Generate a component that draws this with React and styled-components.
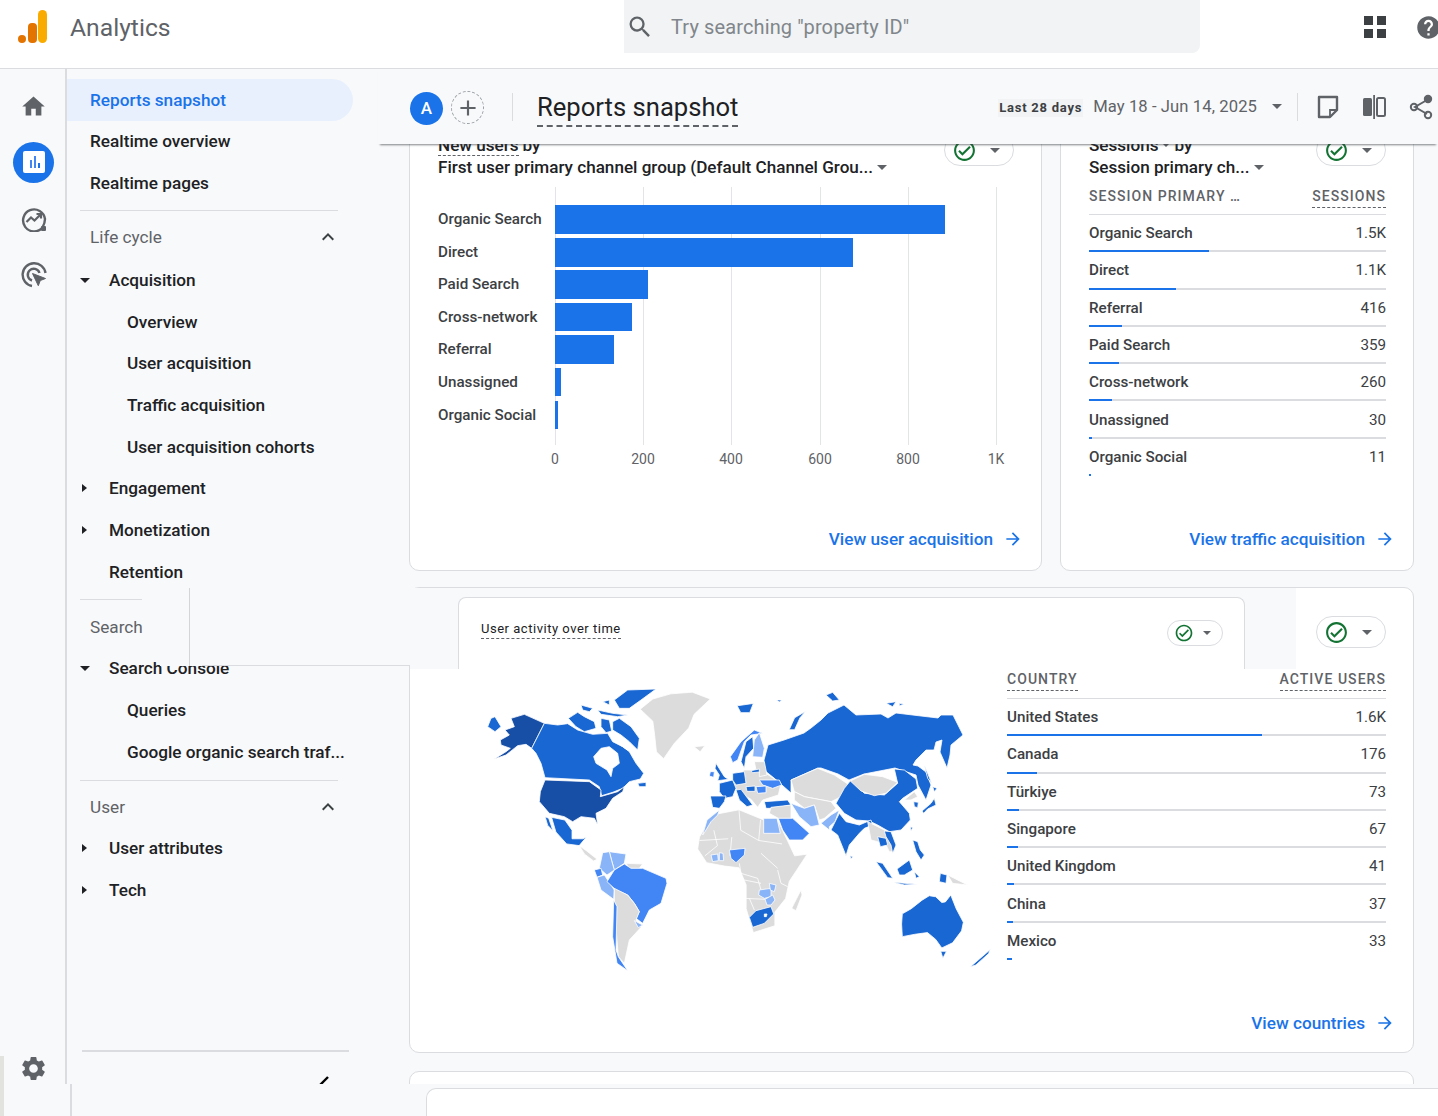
import React from 'react';
import styled, { createGlobalStyle } from 'styled-components';
import { MdHome, MdSettings, MdSearch, MdHelp, MdExpandLess, MdAdd, MdOutlineCheckCircle, MdArrowForward } from 'react-icons/md';

const Global = createGlobalStyle`
  html, body { margin: 0; padding: 0; background: #f8f9fa; }
  * { box-sizing: border-box; }
`;

const Page = styled.div`
  position: relative;
  width: 1438px;
  height: 1116px;
  overflow: hidden;
  background: #f8f9fa;
  font-family: Roboto, "Liberation Sans", sans-serif;
  color: #202124;
  display: flex;
  flex-direction: column;
`;

/* top bar */
const TopBar = styled.header`
  height: 69px;
  flex: none;
  background: #fff;
  border-bottom: 1px solid #dadce0;
  display: flex;
  align-items: flex-start;
`;

const Brand = styled.div`
  width: 624px;
  flex: none;
  height: 54px;
  padding-left: 17px;
  display: flex;
  align-items: center;
  gap: 23px;
  font-size: 24.7px;
  color: #5f6368;
`;

const SearchBox = styled.div`
  width: 576px;
  flex: none;
  height: 53px;
  background: #f1f3f4;
  border-bottom-right-radius: 8px;
  padding-left: 2px;
  display: flex;
  align-items: center;
  gap: 17px;
  font-size: 20px;
  color: #80868b;
  letter-spacing: 0.12px;

  & > svg {
    color: #5f6368;
  }
`;

const TopIcons = styled.div`
  height: 54px;
  flex: none;
  margin-left: 164px;
  display: flex;
  align-items: center;
  gap: 29px;
  color: #5f6368;
`;

const AppsGrid = styled.div`
  width: 22px;
  height: 22px;
  display: grid;
  grid-template-columns: 9px 9px;
  grid-template-rows: 9px 9px;
  gap: 4px;

  & > i {
    background: #3c4043;
  }
`;

/* body columns */
const Columns = styled.div`
  flex: 1;
  min-height: 0;
  display: flex;
`;

const Rail = styled.nav`
  width: 67px;
  flex: none;
  border-right: 2px solid #dadce0;
  padding: 9px 0 32px 2px;
  display: flex;
  flex-direction: column;
  align-items: center;
  color: #5f6368;
`;

const RailItem = styled.div`
  height: 56.3px;
  display: flex;
  align-items: center;
  justify-content: center;
`;

const RailFoot = styled.div`
  margin-top: auto;
  height: 32px;
  display: flex;
  align-items: center;
`;

const ActiveDot = styled.div`
  width: 41px;
  height: 41px;
  border-radius: 50%;
  background: #1a73e8;
  display: flex;
  align-items: center;
  justify-content: center;
`;

const Nav = styled.aside`
  width: 342px;
  flex: none;
  padding-top: 10px;
  padding-bottom: 32px;
  display: flex;
  flex-direction: column;
  font-size: 17.2px;
  font-weight: 500;
`;

const NavItem = styled.div`
  height: 41.7px;
  flex: none;
  display: flex;
  align-items: center;
  position: relative;
  white-space: nowrap;
  padding-left: ${(p) => (p.$level === 2 ? 60 : p.$level === 1 ? 42 : 23)}px;
`;

const ActiveItem = styled(NavItem)`
  width: 286px;
  height: 42px;
  margin-bottom: -0.4px;
  background: #e8f0fe;
  color: #1a73e8;
  border-radius: 0 21px 21px 0;
`;

const NavCaret = styled.span`
  position: absolute;
  left: 13px;
  top: 50%;
  margin-top: -${(p) => (p.$open ? 2 : 4)}px;
  width: 0;
  height: 0;
  border-style: solid;
  ${(p) =>
    p.$open
      ? 'border-width: 5px 5px 0 5px; border-color: #202124 transparent transparent transparent;'
      : 'left: 15px; border-width: 4px 0 4px 5px; border-color: transparent transparent transparent #202124;'}
`;

const NavDivider = styled.div`
  height: 1px;
  flex: none;
  margin: ${(p) => (p.$first ? '6px 0 5px 13px' : '7px 0 6px 13px')};
  background: #dadce0;
  width: ${(p) => p.$width || 258}px;
`;

const SectionRow = styled.div`
  height: ${(p) => (p.$first ? 43 : 41)}px;
  flex: none;
  padding: 0 7px 0 23px;
  width: 280px;
  display: flex;
  align-items: center;
  justify-content: space-between;
  color: #5f6368;
  font-weight: 400;
`;

const NavFoot = styled.div`
  margin-top: auto;
  margin-left: 15px;
  width: 267px;
  height: 34px;
  border-top: 2px solid #dadce0;
  display: flex;
  justify-content: flex-end;
  padding: 23px 20px 0 0;
`;

/* main column */
const Main = styled.main`
  flex: 1;
  min-width: 0;
  display: flex;
  flex-direction: column;
`;

const SubHeader = styled.div`
  height: 75px;
  flex: none;
  margin-left: -31px;
  padding: 0 5px 0 32px;
  position: relative;
  z-index: 2;
  background: #f8f9fa;
  box-shadow: 0 3px 2px -2px rgba(60, 64, 67, 0.65);
  display: flex;
  align-items: center;
`;

const Avatar = styled.div`
  width: 33px;
  height: 33px;
  margin-top: 3px;
  border-radius: 50%;
  background: #1a73e8;
  color: #fff;
  font-size: 17px;
  font-weight: 500;
  display: flex;
  align-items: center;
  justify-content: center;
`;

const AddCircle = styled.div`
  width: 33px;
  height: 33px;
  margin: 2px 0 0 8px;
  border-radius: 50%;
  border: 1px dashed #9aa0a6;
  color: #5f6368;
  display: flex;
  align-items: center;
  justify-content: center;
`;

const VLine = styled.div`
  width: 1px;
  height: 28px;
  background: #dadce0;
`;

const TitleRule = styled(VLine)`
  margin-left: 28px;
`;

const PageTitle = styled.h1`
  margin: 0 0 0 24px;
  font-size: 25.6px;
  font-weight: 400;
  line-height: 32px;
  padding-bottom: 2px;
  border-bottom: 2px dashed #5f6368;
  position: relative;
  top: 2px;
`;

const RangeTag = styled.span`
  margin-left: auto;
  height: 18px;
  padding: 0 1px;
  background: #f1f3f4;
  font-size: 13px;
  font-weight: 700;
  letter-spacing: 0.75px;
  color: #3c4043;
  display: flex;
  align-items: center;
  position: relative;
  top: 1px;
`;

const RangeDates = styled.span`
  margin-left: 10px;
  margin-right: 15px;
  font-size: 16.6px;
  color: #5f6368;
  letter-spacing: 0.1px;
`;

const Caret = styled.span`
  display: inline-block;
  flex: none;
  width: 0;
  height: 0;
  border-style: solid;
  border-width: ${(p) => p.$size || 5}px ${(p) => p.$size || 5}px 0 ${(p) => p.$size || 5}px;
  border-color: #5f6368 transparent transparent transparent;
`;

const HeaderTools = styled.div`
  margin-left: 15px;
  display: flex;
  align-items: center;
  color: #5f6368;
  gap: 23px;

  & > svg:first-of-type {
    margin-left: -4px;
  }
`;

const ScrollArea = styled.div`
  flex: 1;
  min-height: 0;
  overflow: hidden;
`;

const ScrollInner = styled.div`
  margin-top: -26px;
  display: grid;
  grid-template-columns: 633px 354px;
  column-gap: 18px;
  grid-template-rows: 453px 466px 200px;
  row-gap: 16px;
`;

const Card = styled.section`
  grid-column: ${(p) => (p.$wide ? '1 / -1' : 'auto')};
  margin-top: ${(p) => p.$shift || 0}px;
  background: #fff;
  border: 1px solid #dadce0;
  border-radius: 10px;
  padding: 15px 27px ${(p) => p.$bottom || 21}px 28px;
  display: flex;
  flex-direction: column;
`;

const TitleRow = styled.div`
  display: flex;
  justify-content: space-between;
  align-items: flex-start;
`;

const PillRow = styled(TitleRow)`
  justify-content: flex-end;
  margin-top: 13px;
`;

const TitleLine = styled.div`
  height: 22px;
  font-size: 17.1px;
  font-weight: 500;
  display: flex;
  align-items: center;
  gap: 4px;
  white-space: nowrap;
`;

const Dashed = styled.span`
  border-bottom: 1px dashed #5f6368;
`;

const Pill = styled.div`
  width: ${(p) => (p.$small ? 56 : 70)}px;
  height: ${(p) => (p.$small ? 26 : 32)}px;
  border: 1px solid #dadce0;
  border-radius: 16px;
  background: #fff;
  padding-left: ${(p) => (p.$small ? 6 : 7)}px;
  display: flex;
  align-items: center;
  gap: ${(p) => (p.$small ? 9 : 13)}px;
  color: #137333;
`;

const CardFoot = styled.div`
  margin-top: auto;
  margin-right: -9px;
  height: 20px;
  display: flex;
  justify-content: flex-end;
  align-items: center;
  gap: 10px;
  font-size: 17.2px;
  font-weight: 500;
  color: #1a73e8;
`;

const ChartSvg = styled.svg`
  display: block;
  margin-top: 9px;
  font-family: Roboto, "Liberation Sans", sans-serif;
`;

const TableWrap = styled.div`
  margin-top: ${(p) => p.$top || 0}px;
`;

const TableHead = styled.div`
  height: ${(p) => (p.$tall ? 29 : 28)}px;
  border-bottom: 1px solid #dadce0;
  display: flex;
  justify-content: space-between;
  align-items: flex-start;
  font-size: 14px;
  font-weight: 500;
  letter-spacing: 1.05px;
  color: #5f6368;
  line-height: 18px;
`;

const HeadCell = styled.span`
  padding-bottom: 2px;
  border-bottom: ${(p) => (p.$plain ? 'none' : '1px dashed #5f6368')};
`;

const Row = styled.div`
  height: 37.3px;
  display: flex;
  flex-direction: column;
`;

const RowText = styled.div`
  flex: 1;
  padding-top: 1px;
  display: flex;
  justify-content: space-between;
  align-items: center;
  font-size: 15.2px;
  color: #3c4043;
  font-weight: 500;

  & > span:last-child {
    font-weight: 400;
  }
`;

const Track = styled.div`
  height: 2px;
  background: ${(p) => (p.$last ? 'transparent' : '#dadce0')};
`;

const TrackFill = styled.div`
  height: 2px;
  background: #1a73e8;
`;

const MapRow = styled.div`
  margin-top: 22px;
  margin-left: 3px;
  display: grid;
  grid-template-columns: 560px 379px;
  column-gap: 6px;
`;

const MapSvg = styled.svg`
  display: block;
  width: 560px;
  height: 310px;
`;

/* pieces of other views pasted on top of the report */
const NavPatch = styled.div`
  position: absolute;
  left: 160px;
  top: 588px;
  width: 250px;
  height: 78px;
  background: #f8f9fa;
  z-index: 3;

  &::before {
    content: '';
    position: absolute;
    left: 29px;
    top: 0;
    bottom: 0;
    width: 1px;
    background: #d3d5d8;
  }

  &::after {
    content: '';
    position: absolute;
    left: 42px;
    right: 0;
    bottom: 0;
    height: 1px;
    background: #dadce0;
  }
`;

const MainPatch = styled.div`
  position: absolute;
  left: 410px;
  top: 588px;
  width: 886px;
  height: 81px;
  background: #f8f9fa;
  padding: 9px 51px 0 48px;
  z-index: 3;
  display: flex;
`;

const PatchCard = styled.div`
  flex: 1;
  background: #fff;
  border: 1px solid #dadce0;
  border-bottom: none;
  border-radius: 8px 8px 0 0;
  padding: 22px 21px 0 22px;
  display: flex;
  justify-content: space-between;
  align-items: flex-start;
`;

const PatchTitle = styled.span`
  margin-top: 1px;
  font-size: 13px;
  letter-spacing: 0.52px;
  color: #202124;
  border-bottom: 1px dashed #5f6368;
  padding-bottom: 2px;
`;

const BottomPatch = styled.div`
  position: absolute;
  left: 0;
  right: 0;
  bottom: 0;
  height: 32px;
  background: #f8f9fa;
  z-index: 4;
  padding: 4px 0 0 70px;
  display: flex;
`;

const BottomRule = styled.div`
  width: 2px;
  margin-top: -4px;
  background: #dadce0;
`;

const BottomCard = styled.div`
  margin-left: 354px;
  flex: 1;
  background: #fff;
  border: 1px solid #dadce0;
  border-right: none;
  border-bottom: none;
  border-radius: 10px 0 0 0;
`;

const EdgeStrip = styled.div`
  position: absolute;
  left: 0;
  top: 1056px;
  width: 4px;
  height: 60px;
  background: #e2e2de;
  z-index: 5;
`;

/* drawn icons */
const Logo = () => (
  <svg width="30" height="34" viewBox="0 0 30 34">
    <circle cx="5" cy="29" r="4" fill="#e37400" />
    <rect x="11" y="13" width="9" height="20" rx="4" fill="#e37400" />
    <rect x="21" y="0" width="9" height="33" rx="4.5" fill="#f9ab00" />
  </svg>
);

const ReportsIcon = () => (
  <svg width="22" height="22" viewBox="0 0 22 22">
    <rect width="22" height="22" rx="2" fill="#fff" />
    <rect x="7" y="9" width="2" height="8" fill="#4285f4" />
    <rect x="11" y="5" width="2" height="12" fill="#4285f4" />
    <rect x="15" y="12" width="2" height="5" fill="#1a73e8" />
  </svg>
);

const InsightsIcon = () => (
  <svg width="26" height="26" viewBox="0 0 26 26" fill="none" stroke="#5f6368">
    <path d="M21.5 21.5A11 11 0 1 1 24 13c0 3-1 5.7-2.5 8.5z" strokeWidth="2.4" />
    <path d="M5.5 16l4.5-4.5 3.5 3L19.5 8.5M15.5 8h4.5v4.5" strokeWidth="2.2" />
    <rect x="20" y="20" width="5" height="5" rx="1" fill="#5f6368" stroke="none" />
  </svg>
);

const TargetIcon = () => (
  <svg width="26" height="26" viewBox="0 0 26 26" fill="none" stroke="#5f6368" strokeWidth="2.4">
    <path d="M11 24A11.5 11.5 0 1 1 24.5 11" />
    <path d="M11 18.5A6 6 0 1 1 18.5 11" />
    <path d="M11.5 11.5l13 5-5.2 2-2 5.2z" fill="#5f6368" strokeWidth="1" />
  </svg>
);

const NoteIcon = () => (
  <svg width="22" height="24" viewBox="0 0 22 24" fill="none" stroke="#5f6368" strokeWidth="2.4">
    <path d="M2 2h18v13l-7 7H2z" strokeLinejoin="round" />
    <path d="M13 22v-7h7" strokeWidth="1.8" />
  </svg>
);

const CompareIcon = () => (
  <svg width="24" height="24" viewBox="0 0 24 24">
    <rect x="1" y="3" width="9" height="18" rx="1.5" fill="#5f6368" />
    <rect x="11.2" y="0" width="1.8" height="24" fill="#5f6368" />
    <rect x="15" y="3" width="8" height="18" rx="1.5" fill="none" stroke="#5f6368" strokeWidth="2" />
  </svg>
);

const ShareIcon = () => (
  <svg width="24" height="26" viewBox="0 0 24 26" fill="none" stroke="#5f6368" strokeWidth="2">
    <path d="M18 6L6 13l12 7" />
    <circle cx="19" cy="5" r="3.2" fill="#5f6368" />
    <circle cx="5" cy="13" r="3.2" />
    <circle cx="19" cy="21" r="3.2" />
  </svg>
);

const acquisition = [
  { label: 'Organic Search', end: 945, y: 18, h: 29 },
  { label: 'Direct', end: 853, y: 51, h: 29 },
  { label: 'Paid Search', end: 648, y: 83, h: 29 },
  { label: 'Cross-network', end: 632, y: 116, h: 28 },
  { label: 'Referral', end: 614, y: 148, h: 29 },
  { label: 'Unassigned', end: 561, y: 181, h: 28 },
  { label: 'Organic Social', end: 558, y: 214, h: 28 },
];

const ticks = [
  { x: 117, t: '0' },
  { x: 205, t: '200' },
  { x: 293, t: '400' },
  { x: 382, t: '600' },
  { x: 470, t: '800' },
  { x: 558, t: '1K' },
];

const AcquisitionChart = () => (
  <ChartSvg width="590" height="290" viewBox="0 0 590 290">
    {ticks.map((tick) => (
      <g key={tick.t}>
        <line x1={tick.x + 0.5} x2={tick.x + 0.5} y1="0" y2="258" stroke="#e3e4e6" />
        <text x={tick.x} y="277" textAnchor="middle" fontSize="14" fill="#5f6368">
          {tick.t}
        </text>
      </g>
    ))}
    {acquisition.map((bar) => (
      <g key={bar.label}>
        <text x="0" y={bar.y + bar.h / 2 + 4.6} fontSize="15.2" fontWeight="500" fill="#3c4043">
          {bar.label}
        </text>
        <rect x="117" y={bar.y} width={bar.end - 555} height={bar.h} fill="#1a73e8" />
      </g>
    ))}
  </ChartSvg>
);

const sessions = [
  ['Organic Search', '1.5K', 120],
  ['Direct', '1.1K', 87],
  ['Referral', '416', 33],
  ['Paid Search', '359', 30],
  ['Cross-network', '260', 23],
  ['Unassigned', '30', 3],
  ['Organic Social', '11', 2],
];

const countries = [
  ['United States', '1.6K', 255],
  ['Canada', '176', 30],
  ['Türkiye', '73', 12],
  ['Singapore', '67', 11],
  ['United Kingdom', '41', 7],
  ['China', '37', 6],
  ['Mexico', '33', 5],
];

const DataRows = ({ rows }) =>
  rows.map(([label, value, width], i) => (
    <Row key={label}>
      <RowText>
        <span>{label}</span>
        <span>{value}</span>
      </RowText>
      <Track $last={i === rows.length - 1}>
        <TrackFill style={{ width }} />
      </Track>
    </Row>
  ));

const DARK = '#174ea6';
const MID = '#1967d2';
const BLUE = '#4285f4';
const LIGHT = '#8ab4f8';
const GREY = '#dcdcdc';
const WHITE = '#ffffff';

// each region is traced at its own scale; ox/oy is its page position, kx/ky its scale
const mapRegions = [
  {
    ox: 440,
    oy: 670,
    kx: 0.359,
    ky: 0.341,
    shapes: [
      [GREY, '555,115 590,85 640,70 700,65 750,85 705,130 690,170 650,215 620,260 600,240 595,190 590,150 565,125'],
      [GREY, '705,225 735,222 722,240'],
      [MID, '825,105 870,98 860,125 835,125'],
      [MID, '935,88 950,88 942,94'],
      [MID, '970,175 985,140 1015,122 1000,140 985,175'],
      [MID, '1030,180 1045,160 1058,205 1045,185'],
      [MID, '308,432 345,440 365,470 365,495 395,495 405,490 385,515 350,510 320,475'],
      [MID, '290,430 300,435 312,472 297,455'],
      [GREY, '385,515 405,530 435,555 425,560 400,540'],
      [GREY, '720,490 755,425 830,410 900,440 940,445 965,500 985,545 1020,540 970,620 960,670 930,710 930,750 870,770 850,700 850,630 830,580 790,575 740,565 715,525'],
      [null, '830,410 835,470 885,500 890,440'],
      [null, '760,470 770,515 735,545'],
      [null, '885,500 950,510'],
      [null, '810,490 805,545'],
      [null, '720,500 800,495'],
      [MID, '1285,715 1310,700 1340,675 1360,662 1378,665 1395,682 1405,680 1420,660 1435,700 1455,740 1450,765 1425,800 1395,815 1378,790 1355,770 1320,775 1285,782 1283,745'],
      [MID, '1392,825 1408,825 1398,845'],
      [MID, '1475,870 1530,820 1525,832 1490,865'],
    ],
  },
  {
    // russia, traced in page coordinates
    ox: 0,
    oy: 0,
    kx: 1,
    ky: 1,
    shapes: [
      [MID, '763,760 767,745 783,740 803,733 810,728 820,720 827,713 843,705 855,715 880,714 887,718 895,713 920,716 937,718 940,715 952,715 958,727 962,735 950,745 949,755 946,768 939,752 941,740 935,742 933,750 925,750 915,760 912,765 917,766 925,772 930,785 925,800 917,785 915,775 894,768 863,774 848,780 837,774 820,768 817,768 790,780 790,793 773,778 763,770'],
    ],
  },
  {
    // north america
    ox: 480,
    oy: 685,
    kx: 1 / 3,
    ky: 1 / 3,
    shapes: [
      [MID, '30,100 42,95 60,125 42,140 20,125'],
      [DARK, '90,100 130,88 190,115 152,190 135,178 110,182 75,210 40,222 75,200 88,190 60,180 58,165 85,150 72,135 100,125'],
      [MID, '190,115 230,120 260,116 290,135 335,148 380,145 395,170 425,185 445,200 465,235 488,265 478,282 445,290 425,310 395,322 362,332 355,305 325,285 192,278 180,235 165,205 152,190'],
      [WHITE, '338,215 360,190 385,185 410,205 415,235 395,250 390,275 378,255 345,235'],
      [WHITE, '392,140 420,150 445,175 440,195 410,175'],
      [MID, '470,295 495,292 495,305 475,305'],
      [MID, '400,45 440,15 525,12 480,45 445,70 415,70'],
      [MID, '395,110 415,100 450,125 475,160 470,195 445,170 420,150 395,135'],
      [MID, '262,100 290,82 310,95 340,110 345,130 310,140 285,125'],
      [MID, '300,60 335,70 325,80 305,75'],
      [MID, '350,75 395,85 440,90 410,95 360,88'],
      [MID, '360,100 385,105 392,138 375,143 360,125'],
      [MID, '365,50 385,45 385,60'],
      [DARK, '192,285 325,290 360,315 358,335 410,320 430,305 425,320 395,340 375,370 345,385 350,420 340,400 300,395 275,410 250,395 205,385 175,350 178,320'],
    ],
  },
  {
    // europe and the middle east
    ox: 690,
    oy: 720,
    kx: 1 / 3,
    ky: 1 / 3,
    shapes: [
      [GREY, '120,190 160,150 210,150 270,190 262,225 215,240 200,262 180,238 140,215'],
      [BLUE, '118,110 150,65 190,30 215,40 180,45 160,65 140,120 125,128'],
      [MID, '150,125 165,65 185,50 188,85 165,110 160,145'],
      [LIGHT, '185,110 190,60 205,38 220,85 215,112'],
      [MID, '75,130 100,170 112,178 80,182 85,165 72,145'],
      [BLUE, '58,155 70,155 68,172 55,168'],
      [MID, '85,190 125,180 135,205 125,230 100,235 85,215'],
      [MID, '58,228 105,228 100,245 85,265 65,262'],
      [MID, '125,160 160,155 165,190 135,195 125,180'],
      [GREY, '190,125 220,125 228,165 205,170 205,150 195,150'],
      [MID, '180,152 205,147 205,156 185,158'],
      [BLUE, '205,180 265,180 272,195 245,205 215,195'],
      [BLUE, '195,200 225,198 225,218 200,220'],
      [MID, '135,210 150,208 170,235 185,255 168,260 145,240'],
      [MID, '165,200 192,198 192,214 168,214'],
      [MID, '220,245 290,240 300,255 250,265 225,265'],
      [LIGHT, '48,300 85,270 80,285 60,305 45,330 35,345'],
      [GREY, '300,180 380,145 430,165 475,195 450,230 420,245 340,230 310,215'],
      [LIGHT, '218,295 258,295 268,340 218,340'],
      [GREY, '240,262 300,255 300,295 262,295 235,280'],
      [GREY, '310,215 340,230 420,245 435,265 400,295 385,300 370,255 340,265 310,240'],
      [LIGHT, '300,250 340,265 370,255 385,315 360,320 325,290'],
      [BLUE, '262,295 305,295 355,340 335,360 295,360 275,330'],
    ],
  },
  {
    // east asia and oceania
    ox: 820,
    oy: 685,
    kx: 1 / 3,
    ky: 1 / 3,
    shapes: [
      [MID, '15,30 35,22 55,45 35,48'],
      [MID, '195,55 225,50 215,65'],
      [MID, '235,55 250,58 235,62'],
      [MID, '45,355 70,310 90,285 130,325 190,330 230,295 220,252 250,255 285,282 290,310 245,340 235,350 265,385 268,405 240,435 205,440 170,420 145,408 105,405 70,385'],
      [GREY, '88,288 130,268 185,275 230,292 195,325 160,332 120,318'],
      [GREY, '250,345 280,320 290,335 270,345'],
      [MID, '278,350 292,352 290,368 280,365'],
      [MID, '303,378 330,355 340,340 345,360 320,372 308,385'],
      [MID, '335,305 348,310 340,320'],
      [MID, '310,240 332,295 320,280'],
      [LIGHT, '0,415 30,390 55,375 42,410 25,425 25,435'],
      [MID, '30,435 55,385 75,410 115,420 150,405 155,420 130,430 115,445 85,480 75,512 50,450'],
      [GREY, '140,410 170,425 200,440 215,470 222,500 205,500 195,480 170,470 150,465'],
      [MID, '170,455 195,460 200,480 178,485'],
      [MID, '190,438 210,440 225,480 215,505 210,480 195,455'],
      [MID, '275,465 290,470 298,495 310,510 300,525 285,500'],
      [MID, '165,530 185,535 215,580 200,578'],
      [MID, '228,552 265,525 275,555 250,570 235,570'],
      [MID, '215,592 290,598 250,600'],
      [MID, '280,560 295,575 285,580'],
      [MID, '358,565 378,570 375,595 355,590'],
      [GREY, '380,570 440,600 395,595'],
      [MID, '268,425 275,428 270,438'],
      [MID, '87,512 95,515 90,522'],
    ],
  },
  {
    // south america and southern africa
    ox: 580,
    oy: 840,
    kx: 1 / 3,
    ky: 1 / 3,
    shapes: [
      [LIGHT, '85,35 135,42 130,70 100,90 92,62'],
      [LIGHT, '65,38 85,35 92,62 100,90 78,105 55,85'],
      [BLUE, '40,90 60,85 65,105 48,112'],
      [LIGHT, '48,112 70,105 80,120 100,150 98,178 60,150'],
      [GREY, '135,70 185,72 175,85 145,85'],
      [BLUE, '78,125 100,90 130,72 150,85 185,85 255,115 258,130 240,190 205,210 185,250 165,235 175,215 160,190 140,165 105,150'],
      [GREY, '100,145 140,165 160,190 175,215 165,240 180,262 145,300 130,370 112,350 100,200'],
      [BLUE, '98,180 108,200 105,330 112,350 140,392 108,370 95,290'],
      [LIGHT, '160,242 185,255 172,263'],
      [null, '475,70 480,100 530,115 540,150'],
      [null, '490,120 540,130'],
      [null, '590,90 600,130 620,140'],
      [null, '540,40 590,85'],
      [null, '490,175 555,178'],
      [null, '505,175 520,210'],
      [BLUE, '445,30 492,25 490,45 465,68 450,55'],
      [LIGHT, '390,45 410,42 412,62 395,65'],
      [LIGHT, '415,38 426,40 428,62 415,62'],
      [LIGHT, '535,150 570,145 570,170 550,175 533,165'],
      [LIGHT, '565,130 585,135 580,155 568,150'],
      [LIGHT, '552,178 575,165 582,180 570,195 558,195'],
      [MID, '505,232 525,212 570,200 578,222 550,250 515,262'],
      [WHITE, '550,222 558,222 556,230 550,230'],
      [GREY, '632,205 660,150 663,165 645,212'],
    ],
  },
];

const WorldMap = () => (
  <MapSvg viewBox="0 0 560 310">
    {mapRegions.map(({ ox, oy, kx, ky, shapes }) => (
      <g key={`${ox}-${oy}`} transform={`translate(${ox - 440} ${oy - 670}) scale(${kx} ${ky})`}>
        {shapes.map(([fill, points], i) =>
          fill ? (
            <polygon key={i} points={points} fill={fill} stroke="#fff" strokeWidth="0.8" vectorEffect="non-scaling-stroke" strokeLinejoin="round" />
          ) : (
            <polyline key={i} points={points} fill="none" stroke="#fff" strokeWidth="0.8" vectorEffect="non-scaling-stroke" />
          ),
        )}
      </g>
    ))}
  </MapSvg>
);

const StatusPill = ({ small }) => (
  <Pill $small={small}>
    <MdOutlineCheckCircle size={small ? 20 : 25} />
    <Caret $size={small ? 4 : 5} />
  </Pill>
);

const App = () => (
  <Page>
    <Global />
    <TopBar>
      <Brand>
        <Logo />
        <span>Analytics</span>
      </Brand>
      <SearchBox>
        <MdSearch size={28} />
        <span>Try searching "property ID"</span>
      </SearchBox>
      <TopIcons>
        <AppsGrid>
          <i />
          <i />
          <i />
          <i />
        </AppsGrid>
        <MdHelp size={27} />
      </TopIcons>
    </TopBar>
    <Columns>
      <Rail>
        <RailItem>
          <MdHome size={27} />
        </RailItem>
        <RailItem>
          <ActiveDot>
            <ReportsIcon />
          </ActiveDot>
        </RailItem>
        <RailItem>
          <InsightsIcon />
        </RailItem>
        <RailItem>
          <TargetIcon />
        </RailItem>
        <RailFoot>
          <MdSettings size={29} />
        </RailFoot>
      </Rail>
      <Nav>
        <ActiveItem>Reports snapshot</ActiveItem>
        <NavItem>Realtime overview</NavItem>
        <NavItem>Realtime pages</NavItem>
        <NavDivider $first />
        <SectionRow $first>
          Life cycle
          <MdExpandLess size={24} color="#3c4043" />
        </SectionRow>
        <NavItem $level={1}>
          <NavCaret $open />
          Acquisition
        </NavItem>
        <NavItem $level={2}>Overview</NavItem>
        <NavItem $level={2}>User acquisition</NavItem>
        <NavItem $level={2}>Traffic acquisition</NavItem>
        <NavItem $level={2}>User acquisition cohorts</NavItem>
        <NavItem $level={1}>
          <NavCaret />
          Engagement
        </NavItem>
        <NavItem $level={1}>
          <NavCaret />
          Monetization
        </NavItem>
        <NavItem $level={1}>Retention</NavItem>
        <NavDivider $width={62} />
        <SectionRow>Search</SectionRow>
        <NavItem $level={1}>
          <NavCaret $open />
          Search Console
        </NavItem>
        <NavItem $level={2}>Queries</NavItem>
        <NavItem $level={2}>Google organic search traf...</NavItem>
        <NavDivider />
        <SectionRow>
          User
          <MdExpandLess size={24} color="#3c4043" />
        </SectionRow>
        <NavItem $level={1}>
          <NavCaret />
          User attributes
        </NavItem>
        <NavItem $level={1}>
          <NavCaret />
          Tech
        </NavItem>
        <NavFoot>
          <svg width="10" height="10" viewBox="0 0 10 10">
            <path d="M1 10l8-8" stroke="#000" strokeWidth="2.4" />
          </svg>
        </NavFoot>
      </Nav>
      <Main>
        <SubHeader>
          <Avatar>A</Avatar>
          <AddCircle>
            <MdAdd size={26} />
          </AddCircle>
          <TitleRule />
          <PageTitle>Reports snapshot</PageTitle>
          <RangeTag>Last 28 days</RangeTag>
          <RangeDates>May 18 - Jun 14, 2025</RangeDates>
          <Caret />
          <HeaderTools>
            <VLine />
            <NoteIcon />
            <CompareIcon />
            <ShareIcon />
          </HeaderTools>
        </SubHeader>
        <ScrollArea>
          <ScrollInner>
            <Card>
              <TitleRow>
                <div>
                  <TitleLine>
                    <Dashed>New users</Dashed> by
                  </TitleLine>
                  <TitleLine>
                    First user primary channel group (Default Channel Grou...
                    <Caret />
                  </TitleLine>
                </div>
                <StatusPill />
              </TitleRow>
              <AcquisitionChart />
              <CardFoot>
                View user acquisition
                <MdArrowForward size={20} />
              </CardFoot>
            </Card>
            <Card>
              <TitleRow>
                <div>
                  <TitleLine>
                    Sessions
                    <Caret $size={4} /> by
                  </TitleLine>
                  <TitleLine>
                    Session primary ch...
                    <Caret />
                  </TitleLine>
                </div>
                <StatusPill />
              </TitleRow>
              <TableWrap $top={9}>
                <TableHead>
                  <HeadCell $plain>SESSION PRIMARY …</HeadCell>
                  <HeadCell>SESSIONS</HeadCell>
                </TableHead>
                <DataRows rows={sessions} />
              </TableWrap>
              <CardFoot>
                View traffic acquisition
                <MdArrowForward size={20} />
              </CardFoot>
            </Card>
            <Card $wide $bottom={19}>
              <PillRow>
                <StatusPill />
              </PillRow>
              <MapRow>
                <WorldMap />
                <TableWrap>
                  <TableHead $tall>
                    <HeadCell>COUNTRY</HeadCell>
                    <HeadCell>ACTIVE USERS</HeadCell>
                  </TableHead>
                  <DataRows rows={countries} />
                </TableWrap>
              </MapRow>
              <CardFoot>
                View countries
                <MdArrowForward size={20} />
              </CardFoot>
            </Card>
            <Card $wide $shift={2} />
          </ScrollInner>
        </ScrollArea>
      </Main>
    </Columns>
    <NavPatch />
    <MainPatch>
      <PatchCard>
        <PatchTitle>User activity over time</PatchTitle>
        <StatusPill small />
      </PatchCard>
    </MainPatch>
    <BottomPatch>
      <BottomRule />
      <BottomCard />
    </BottomPatch>
    <EdgeStrip />
  </Page>
);

export default App;
